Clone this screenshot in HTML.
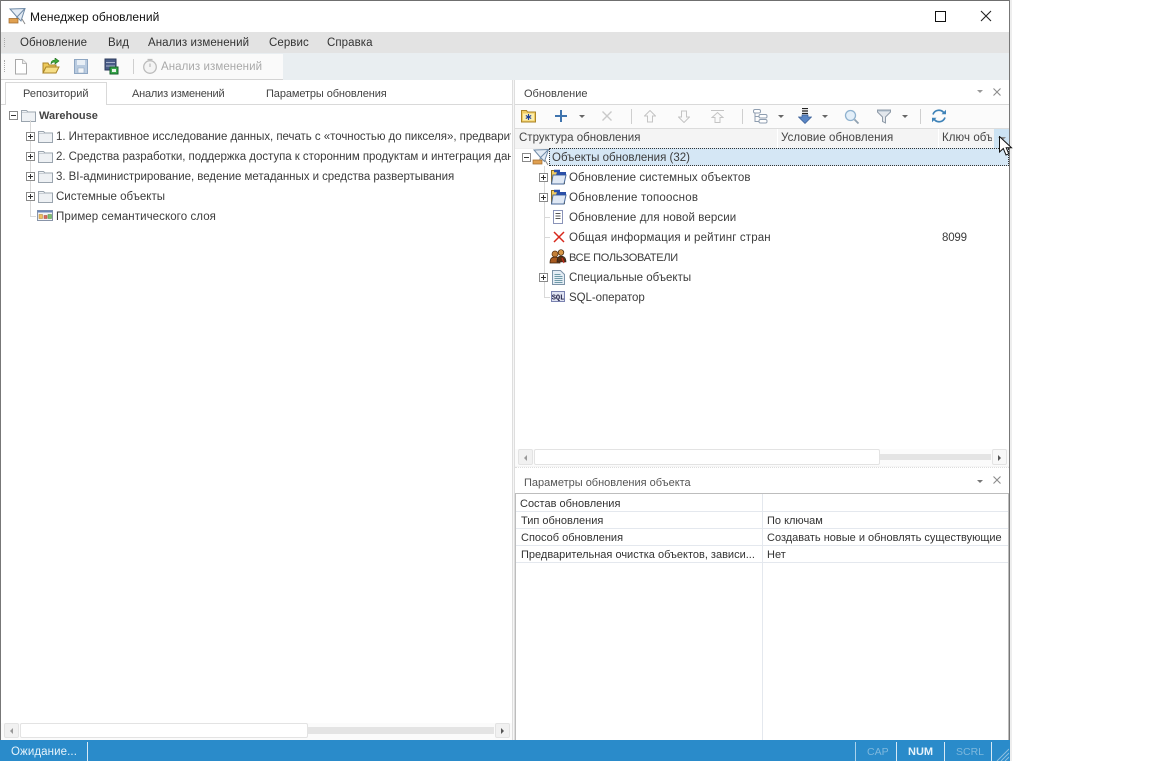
<!DOCTYPE html>
<html lang="ru"><head><meta charset="utf-8"><title>Менеджер обновлений</title>
<style>
html,body{margin:0;padding:0;background:#fff;overflow:hidden}
#p{position:relative;width:1174px;height:761px;overflow:hidden;font:11.5px "Liberation Sans",sans-serif;color:#3c3c3c}
#p div,#p svg{position:absolute}
.t{white-space:nowrap;line-height:14px;letter-spacing:.07px;overflow:hidden;margin-top:1px}
.s{font-size:11px;letter-spacing:0}
.pl{width:9px;height:9px;border:1px solid #8a8a8a;background:#fff;box-sizing:border-box}
.pl:before{content:"";position:absolute;left:1px;top:3px;width:5px;height:1px;background:#333}
.pl.m:after{content:"";position:absolute;left:3px;top:1px;width:1px;height:5px;background:#333}
.dv{background:#cfcfcf;width:1px}
.hl{background:#d9d9d9;height:1px}
.vl{background:#d9d9d9;width:1px}
.tri{width:0;height:0;border-left:3px solid transparent;border-right:3px solid transparent;border-top:3px solid #666}
</style></head><body><div id="p">
<!-- window -->
<div style="left:0;top:0;width:1010px;height:761px;background:#fff"></div>
<div style="left:0;top:0;width:1010px;height:1px;background:#6f6f6f"></div>
<div style="left:0;top:0;width:1px;height:740px;background:#777"></div>
<div style="left:1009px;top:0;width:1px;height:761px;background:#777"></div>
<div style="left:1010px;top:0;width:2px;height:761px;background:#eee"></div>
<!-- title -->
<svg style="left:8px;top:7px" width="19" height="18" viewBox="0 0 19 18"><path d="M2 2L17 1.500L13 14L9 10Z" fill="#e3ebf4" stroke="#6f8aa6"/><path d="M17 1.500L9 10L8 14" fill="none" stroke="#6f8aa6"/><path d="M1 11.500h9v4.500H1z" fill="#e0a050" stroke="#a06a2a" stroke-width=".7"/><path d="M14 12l3 5" stroke="#888"/></svg>
<div class="t" style="left:30px;top:10px;font-size:12px;margin-top:0;color:#111;letter-spacing:.06px">Менеджер обновлений</div>
<div style="left:935px;top:11px;width:9px;height:9px;border:1px solid #111"></div>
<svg style="left:980px;top:10px" width="12" height="12"><path d="M1 1L11 11M11 1L1 11" stroke="#222" stroke-width="1.100"/></svg>
<!-- menu -->
<div style="left:1px;top:32px;width:1008px;height:21px;background:#e3e3e3"></div>
<div class="t" style="left:20px;top:35px;color:#333">Обновление</div>
<div class="t" style="left:108px;top:35px;color:#333">Вид</div>
<div class="t" style="left:148px;top:35px;color:#333">Анализ изменений</div>
<div class="t" style="left:269px;top:35px;color:#333">Сервис</div>
<div class="t" style="left:327px;top:35px;color:#333">Справка</div>
<div style="left:4px;top:38px;width:2px;height:9px;border-left:1px dotted #aaa"></div>
<!-- toolbar -->
<div style="left:1px;top:53px;width:1008px;height:27px;background:#e9eef1"></div>
<div style="left:1px;top:54px;width:282px;height:25px;background:#fafafa"></div>
<div style="left:1px;top:79px;width:282px;height:1px;background:#d4d4d4"></div>
<div style="left:4px;top:60px;width:2px;height:12px;border-left:1px dotted #aaa"></div>
<svg style="left:14px;top:59px" width="14" height="16"><path d="M1.500 .5h7l4 4v10.500h-11z" fill="#fff" stroke="#a8a8a8"/><path d="M8.500 .5v4h4" fill="#eee" stroke="#bbb"/></svg>
<svg style="left:42px;top:58px" width="18" height="16"><path d="M1 5h5l1 2h7v8H1z" fill="#eec95a" stroke="#a98428"/><path d="M1 15l3-6h13l-3 6z" fill="#f6de86" stroke="#a98428"/><path d="M9 6c0-3 2-4 4-4V0l4 3-4 3V4c-1 0-3 0-4 2z" fill="#3faa3a" stroke="#1e6f1e" stroke-width=".6"/></svg>
<svg style="left:74px;top:59px" width="14" height="15"><path d="M.5.500h13v14H.5z" fill="#b9cbe0" stroke="#8ea6c2"/><path d="M3 1h8v5H3z" fill="#e8eff6"/><path d="M4 9h6v5H4z" fill="#f2f5f8" stroke="#8ea6c2" stroke-width=".6"/></svg>
<svg style="left:104px;top:58px" width="16" height="17"><path d="M1 1h11v11H1z" fill="#4a5d88" stroke="#2c3a5c"/><path d="M2 4.500h9M2 8h9" stroke="#a8b4cc"/><rect x="6" y="9" width="8" height="7" fill="#37a84a" stroke="#14602a"/><rect x="8" y="11" width="4" height="3" fill="#e8f4e8"/></svg>
<div class="dv" style="left:133px;top:59px;height:15px"></div>
<svg style="left:142px;top:58px" width="16" height="16"><circle cx="8" cy="9" r="6.300" fill="#f4f4f4" stroke="#bcbcbc" stroke-width="1.300"/><path d="M8 9V5.500M5.500 1.500h5" stroke="#bcbcbc" stroke-width="1.200" fill="none"/></svg>
<div class="t" style="left:161px;top:59px;color:#a9a9a9">Анализ изменений</div>
<!-- left tabs -->
<div style="left:1px;top:80px;width:1008px;height:660px;background:#f5f5f5"></div>
<div style="left:1px;top:104px;width:511px;height:636px;background:#fff"></div>
<div style="left:1px;top:104px;width:511px;height:1px;background:#d9d9d9"></div>
<div style="left:1px;top:80px;width:511px;height:2px;background:#fff"></div>
<div style="left:1px;top:82px;width:511px;height:22px;background:#fff"></div>
<div style="left:5px;top:82px;width:102px;height:23px;background:#fff;border:1px solid #d9d9d9;border-bottom:0;box-sizing:border-box"></div>
<div class="t s" style="left:23px;top:86px;color:#444">Репозиторий</div>
<div class="t s" style="left:132px;top:86px;color:#444;letter-spacing:-.2px">Анализ изменений</div>
<div class="t s" style="left:266px;top:86px;color:#444;letter-spacing:-.1px">Параметры обновления</div>
<!-- left tree -->
<div class="pl" style="left:9px;top:111px"></div>
<svg style="left:21px;top:109px" width="15" height="13"><path d="M.5 1.500h5l1.500 1.500h7.500v9.500H.5z" fill="#eef1f4" stroke="#9aa4ae"/><path d="M1 3.500h13" stroke="#c8ced4"/></svg>
<div class="t s" style="left:39px;top:108px;font-weight:bold;color:#444">Warehouse</div>
<div class="vl" style="left:30px;top:120px;height:96px"></div>
<div class="hl" style="left:30px;top:216px;width:6px"></div>
<div class="pl m" style="left:26px;top:132px"></div>
<svg style="left:38px;top:130px" width="15" height="13"><path d="M.5 1.500h5l1.500 1.500h7.500v9.500H.5z" fill="#eef1f4" stroke="#9aa4ae"/><path d="M1 3.500h13" stroke="#c8ced4"/></svg>
<div class="t" style="left:56px;top:129px;width:455px;letter-spacing:-.04px">1. Интерактивное исследование данных, печать с «точностью до пикселя», предварительный просмотр</div>
<div class="pl m" style="left:26px;top:152px"></div>
<svg style="left:38px;top:150px" width="15" height="13"><path d="M.5 1.500h5l1.500 1.500h7.500v9.500H.5z" fill="#eef1f4" stroke="#9aa4ae"/><path d="M1 3.500h13" stroke="#c8ced4"/></svg>
<div class="t" style="left:56px;top:149px;width:455px;letter-spacing:-.04px">2. Средства разработки, поддержка доступа к сторонним продуктам и интеграция данных</div>
<div class="pl m" style="left:26px;top:172px"></div>
<svg style="left:38px;top:170px" width="15" height="13"><path d="M.5 1.500h5l1.500 1.500h7.500v9.500H.5z" fill="#eef1f4" stroke="#9aa4ae"/><path d="M1 3.500h13" stroke="#c8ced4"/></svg>
<div class="t" style="left:56px;top:169px;letter-spacing:-.04px">3. BI-администрирование, ведение метаданных и средства развертывания</div>
<div class="pl m" style="left:26px;top:192px"></div>
<svg style="left:38px;top:190px" width="15" height="13"><path d="M.5 1.500h5l1.500 1.500h7.500v9.500H.5z" fill="#eef1f4" stroke="#9aa4ae"/><path d="M1 3.500h13" stroke="#c8ced4"/></svg>
<div class="t" style="left:56px;top:189px;letter-spacing:0">Системные объекты</div>
<svg style="left:37px;top:210px" width="17" height="12"><path d="M.5.500h15v10H.5z" fill="#f5f5f5" stroke="#8894a8"/><path d="M.5.500h15v2H.5z" fill="#6b87b8"/><rect x="2" y="4.500" width="3.500" height="4" fill="#f0c060" stroke="#b08030" stroke-width=".5"/><rect x="7" y="5.500" width="3" height="3" fill="#e06a5a" stroke="#a04030" stroke-width=".5"/><rect x="11" y="4.500" width="3.500" height="4" fill="#7cc070" stroke="#4a8a40" stroke-width=".5"/></svg>
<div class="t" style="left:56px;top:209px;letter-spacing:.08px">Пример семантического слоя</div>
<!-- left scrollbar -->
<div style="left:1px;top:723px;width:511px;height:17px;background:#fbfbfb"></div>
<div style="left:4px;top:723px;width:15px;height:15px;background:#f1f1f1;border:1px solid #e3e3e3;border-radius:2px;box-sizing:border-box"></div>
<div style="left:10px;top:728px;width:0;height:0;border-top:3px solid transparent;border-bottom:3px solid transparent;border-right:3px solid #999"></div>
<div style="left:20px;top:723px;width:288px;height:15px;background:#fff;border:1px solid #e3e3e3;border-radius:2px;box-sizing:border-box"></div>
<div style="left:308px;top:727px;width:186px;height:7px;background:#e4e4e4"></div>
<div style="left:495px;top:723px;width:15px;height:15px;background:#f1f1f1;border:1px solid #e3e3e3;border-radius:2px;box-sizing:border-box"></div>
<div style="left:501px;top:728px;width:0;height:0;border-top:3px solid transparent;border-bottom:3px solid transparent;border-left:3px solid #555"></div>
<!-- right panel -->
<div style="left:512px;top:80px;width:3px;height:660px;background:#f6f6f6;border-left:1px solid #dedede;border-right:1px solid #dedede;box-sizing:border-box"></div>
<div style="left:515px;top:80px;width:494px;height:25px;background:#fff"></div>
<div class="t s" style="left:524px;top:86px;color:#444">Обновление</div>
<div class="tri" style="left:977px;top:90px;border-top-color:#999"></div>
<svg style="left:992px;top:87px" width="10" height="10"><path d="M1.500 1.500L8.500 8.500M8.500 1.500L1.500 8.500" stroke="#8c8c8c" stroke-width="1.100"/></svg>
<!-- right toolbar -->
<div style="left:515px;top:104px;width:494px;height:1px;background:#d9d9d9"></div>
<div style="left:515px;top:105px;width:494px;height:23px;background:#fbfbfb"></div>
<div style="left:515px;top:128px;width:494px;height:1px;background:#dcdcdc"></div>
<svg style="left:521px;top:109px" width="15" height="14"><path d="M.5 1.500h5l1 1.500h8v10H.5z" fill="#f2cd62" stroke="#a98428"/><path d="M2 4.500h11v7H2z" fill="#fbeeb0"/><path d="M7.500 5v6M4.800 6.500l5.400 3M10.200 6.500l-5.400 3" stroke="#1a3f9a" stroke-width="1.100"/></svg>
<svg style="left:555px;top:110px" width="12" height="12"><path d="M6 0v12M0 6h12" stroke="#3f74ae" stroke-width="2"/></svg>
<div class="tri" style="left:579px;top:115px"></div>
<svg style="left:602px;top:111px" width="10" height="10"><path d="M.5.500L9.500 9.500M9.500.500L.5 9.500" stroke="#c9c9c9" stroke-width="1.400"/></svg>
<div class="dv" style="left:631px;top:109px;height:15px"></div>
<svg style="left:644px;top:110px" width="12" height="13"><path d="M6 .5L11.500 6H8.500v6h-5V6H.5z" fill="#fafafa" stroke="#c4c4c4"/></svg>
<svg style="left:678px;top:110px" width="12" height="13"><path d="M6 12.500L11.500 7H8.500V1h-5v6H.5z" fill="#fafafa" stroke="#c4c4c4"/></svg>
<svg style="left:711px;top:110px" width="13" height="13"><path d="M0 .5h13" stroke="#c4c4c4"/><path d="M6.500 2.500L12 7.500H9v5H4v-5H1z" fill="#fafafa" stroke="#c4c4c4"/></svg>
<div class="dv" style="left:742px;top:109px;height:15px"></div>
<svg style="left:753px;top:108px" width="15" height="16"><path d="M2 5v8.500h4M2 8.500h4" fill="none" stroke="#8f9eb0"/><rect x=".5" y="1.500" width="7" height="3.500" rx="1.500" fill="#fff" stroke="#8f9eb0"/><rect x="6" y="6.500" width="8" height="3.500" rx="1.500" fill="#fff" stroke="#8f9eb0"/><rect x="6" y="11.500" width="8" height="3.500" rx="1.500" fill="#fff" stroke="#8f9eb0"/></svg>
<div class="tri" style="left:778px;top:115px"></div>
<svg style="left:798px;top:108px" width="14" height="16"><path d="M4 .5h6M4 3h6M4 5.500h6" stroke="#222" stroke-width="1.200"/><path d="M4 7h6v2h3.500L7 15.500.5 9H4z" fill="#5a86c4" stroke="#3a5f96" stroke-width=".7"/></svg>
<div class="tri" style="left:822px;top:115px"></div>
<svg style="left:844px;top:109px" width="16" height="16"><circle cx="6.500" cy="6.500" r="5" fill="#e3eff9" stroke="#8fb2cf" stroke-width="1.300"/><path d="M10.500 10.500l4 4" stroke="#8fa0b0" stroke-width="1.800"/></svg>
<svg style="left:877px;top:109px" width="14" height="15"><path d="M.5 1h13v2L8.500 8v6l-3-1.500V8L.5 3z" fill="#e3e7ec" stroke="#8f9ba8"/><path d="M1 1.500h12v1H1z" fill="#aebccb"/></svg>
<div class="tri" style="left:902px;top:115px"></div>
<div class="dv" style="left:920px;top:109px;height:15px"></div>
<svg style="left:931px;top:108px" width="16" height="16"><path d="M2 6.500A6.200 6.200 0 0 1 13 5M14 9.500A6.200 6.200 0 0 1 3 11" fill="none" stroke="#3f83b8" stroke-width="1.700"/><path d="M15 1.800v4.500h-4.500zM1 14.200V9.700h4.500z" fill="#3f83b8"/></svg>
<!-- column headers -->
<div style="left:515px;top:129px;width:494px;height:19px;background:#f4f4f4"></div>
<div style="left:515px;top:148px;width:494px;height:1px;background:#eee"></div>
<div style="left:777px;top:129px;width:1px;height:19px;background:#fff"></div>
<div style="left:938px;top:129px;width:1px;height:19px;background:#fff"></div>
<div class="t" style="left:519px;top:130px;color:#444;letter-spacing:0">Структура обновления</div>
<div class="t" style="left:781px;top:130px;color:#444;letter-spacing:.05px">Условие обновления</div>
<div class="t" style="left:942px;top:130px;width:50px;color:#444">Ключ объекта</div>
<div style="left:994px;top:129px;width:15px;height:19px;background:#cde3f3"></div>
<div class="tri" style="left:998px;top:137px;border-left-width:4px;border-right-width:4px;border-top-width:4px;border-top-color:#8a8a8a"></div>
<!-- right tree -->
<div style="left:515px;top:149px;width:494px;height:300px;background:#fff"></div>
<div style="left:549px;top:148px;width:460px;height:18px;background:#d5e7f5;border:1px dotted #333;box-sizing:border-box;border-right:0"></div>
<div style="left:1008px;top:148px;width:1px;height:18px;border-left:1px dotted #333;box-sizing:border-box"></div>
<div class="pl" style="left:522px;top:153px"></div>
<svg style="left:532px;top:148px" width="18" height="18" viewBox="0 0 18 18"><path d="M2 2L16.500 1.500L12.500 13.500L8.500 9.500Z" fill="#e3ebf4" stroke="#6f8aa6"/><path d="M16.500 1.500L8.500 9.500L7.500 13" fill="none" stroke="#6f8aa6"/><path d="M1 12h9v4H1z" fill="#e0a050" stroke="#a06a2a" stroke-width=".7"/><path d="M13 12l3 5" stroke="#888"/></svg>
<div class="t" style="left:552px;top:150px;letter-spacing:0">Объекты обновления (32)</div>
<div class="vl" style="left:544px;top:166px;height:131px"></div>
<div class="hl" style="left:544px;top:217px;width:6px"></div>
<div class="hl" style="left:544px;top:237px;width:6px"></div>
<div class="hl" style="left:544px;top:297px;width:6px"></div>
<div class="pl m" style="left:539px;top:173px"></div>
<svg style="left:550px;top:169px" width="17" height="16"><path d="M1.500 1.500h6v3h7v10h-13z" fill="#f2cd62" stroke="#8a6c20"/><path d="M3 6h13l-2 9H1.500z" fill="#dfe8f4" stroke="#4a6a9a"/><path d="M4 .8h6v2.500H4zM7 3h9v3H6z" fill="#2a50a8"/></svg>
<div class="t" style="left:569px;top:170px">Обновление системных объектов</div>
<div class="pl m" style="left:539px;top:193px"></div>
<svg style="left:550px;top:189px" width="17" height="16"><path d="M1.500 1.500h6v3h7v10h-13z" fill="#f2cd62" stroke="#8a6c20"/><path d="M3 6h13l-2 9H1.500z" fill="#dfe8f4" stroke="#4a6a9a"/><path d="M4 .8h6v2.500H4zM7 3h9v3H6z" fill="#2a50a8"/></svg>
<div class="t" style="left:569px;top:190px;letter-spacing:.22px">Обновление топооснов</div>
<svg style="left:553px;top:210px" width="11" height="14"><path d="M.5.500h9v13h-9z" fill="#fff" stroke="#8a93b8"/><path d="M2.500 3.500h5M2.500 6h5M2.500 8.500h5" stroke="#555"/></svg>
<div class="t" style="left:569px;top:210px;letter-spacing:.1px">Обновление для новой версии</div>
<svg style="left:553px;top:231px" width="12" height="12"><path d="M1 1L11 11M11 1L1 11" stroke="#d8281c" stroke-width="1.500"/></svg>
<div class="t" style="left:569px;top:230px;letter-spacing:.15px">Общая информация и рейтинг стран</div>
<div class="t" style="left:942px;top:230px;letter-spacing:-.2px">8099</div>
<svg style="left:549px;top:248px" width="18" height="17"><circle cx="6" cy="6" r="3" fill="#c48038" stroke="#5a3010" stroke-width=".7"/><path d="M1 15c0-5 2-6 5-6s5 2 5 6z" fill="#a85a20" stroke="#3a2008" stroke-width=".7"/><circle cx="12" cy="4.500" r="2.800" fill="#d89848" stroke="#3a2008" stroke-width=".7"/><path d="M8 14c0-5 2-6 4-6s5 1 5 6z" fill="#5a3010" stroke="#222" stroke-width=".6"/><path d="M13 10l2 5" stroke="#c8281c" stroke-width="1.200"/></svg>
<div class="t s" style="left:569px;top:250px;letter-spacing:-.3px">ВСЕ ПОЛЬЗОВАТЕЛИ</div>
<div class="pl m" style="left:539px;top:273px"></div>
<svg style="left:552px;top:270px" width="13" height="15"><path d="M.5.500h8l4 4v10H.5z" fill="#e4edf5" stroke="#7d93a8"/><path d="M2.500 4.500h6M2.500 6.500h8M2.500 8.500h8M2.500 10.500h8M2.500 12.500h8" stroke="#6f9aa8"/></svg>
<div class="t" style="left:569px;top:270px;letter-spacing:0">Специальные объекты</div>
<svg style="left:551px;top:291px" width="14" height="12"><path d="M.5.500h13v10H.5z" fill="#dfe3f2" stroke="#7a82b0"/><text x="7" y="8.500" font-family="Liberation Mono,monospace" font-size="7" font-weight="bold" text-anchor="middle" fill="#1a1a40">SQL</text></svg>
<div class="t" style="left:569px;top:290px;letter-spacing:-.05px">SQL-оператор</div>
<!-- right scrollbar -->
<div style="left:515px;top:449px;width:494px;height:17px;background:#fbfbfb"></div>
<div style="left:518px;top:449px;width:15px;height:16px;background:#f1f1f1;border:1px solid #e3e3e3;border-radius:2px;box-sizing:border-box"></div>
<div style="left:524px;top:455px;width:0;height:0;border-top:3px solid transparent;border-bottom:3px solid transparent;border-right:3px solid #999"></div>
<div style="left:534px;top:449px;width:346px;height:16px;background:#fff;border:1px solid #e3e3e3;border-radius:2px;box-sizing:border-box"></div>
<div style="left:880px;top:454px;width:111px;height:6px;background:#e4e4e4"></div>
<div style="left:992px;top:449px;width:15px;height:16px;background:#f8f8f8;border:1px solid #e3e3e3;border-radius:2px;box-sizing:border-box"></div>
<div style="left:998px;top:455px;width:0;height:0;border-top:3px solid transparent;border-bottom:3px solid transparent;border-left:3px solid #555"></div>
<!-- params panel -->
<div style="left:515px;top:467px;width:494px;height:26px;background:#fff;border-top:1px dotted #ddd;box-sizing:border-box"></div>
<div class="t s" style="left:524px;top:475px;color:#555">Параметры обновления объекта</div>
<div class="tri" style="left:977px;top:480px;border-top-color:#777"></div>
<svg style="left:992px;top:475px" width="10" height="10"><path d="M1.500 1.500L8.500 8.500M8.500 1.500L1.500 8.500" stroke="#8c8c8c" stroke-width="1.100"/></svg>
<div style="left:515px;top:493px;width:494px;height:247px;background:#fff;border:1px solid #bdbdbd;border-bottom:0;box-sizing:border-box"></div>
<div style="left:762px;top:494px;width:1px;height:246px;background:#e4e8ee"></div>
<div style="left:516px;top:511px;width:492px;height:1px;background:#e4e8ee"></div>
<div style="left:516px;top:528px;width:492px;height:1px;background:#e4e8ee"></div>
<div style="left:516px;top:545px;width:492px;height:1px;background:#e4e8ee"></div>
<div style="left:516px;top:562px;width:492px;height:1px;background:#e4e8ee"></div>
<div class="t s" style="left:520px;top:496px;color:#333">Состав обновления</div>
<div class="t s" style="left:521px;top:513px;color:#333">Тип обновления</div>
<div class="t s" style="left:521px;top:530px;color:#333">Способ обновления</div>
<div class="t s" style="left:521px;top:547px;color:#333">Предварительная очистка объектов, зависи...</div>
<div class="t s" style="left:767px;top:513px;color:#333">По ключам</div>
<div class="t s" style="left:767px;top:530px;color:#333">Создавать новые и обновлять существующие</div>
<div class="t s" style="left:767px;top:547px;color:#333">Нет</div>
<!-- status -->
<div style="left:0;top:740px;width:1010px;height:21px;background:#2a8bca"></div>
<div class="t" style="left:11px;top:744px;color:#e6f3fb;letter-spacing:.1px">Ожидание...</div>
<div style="left:87px;top:742px;width:1px;height:19px;background:#d6e9f5"></div>
<div style="left:855px;top:742px;width:1px;height:19px;background:#a9d2ec"></div>
<div style="left:896px;top:742px;width:1px;height:19px;background:#d6e9f5"></div>
<div style="left:944px;top:742px;width:1px;height:19px;background:#d6e9f5"></div>
<div style="left:991px;top:742px;width:1px;height:19px;background:#d6e9f5"></div>
<div class="t s" style="left:867px;top:744px;color:#7eb8dd;font-size:10.500px">CAP</div>
<div class="t s" style="left:908px;top:744px;color:#e6f3fb;font-weight:bold">NUM</div>
<div class="t s" style="left:956px;top:744px;color:#7eb8dd;font-size:10.500px">SCRL</div>
<svg style="left:996px;top:747px" width="13" height="14"><path d="M1 14L13 2M5 14L13 6M9 14L13 10" stroke="#8fc0e0" stroke-width="1"/></svg>
<!-- cursor -->
<svg style="left:999px;top:136px" width="14" height="22"><path d="M.5.500V16L4.300 12.500L7 19L9.800 17.800L7.200 11.700H12.500Z" fill="#fff" stroke="#111" stroke-width="1"/></svg>
</div></body></html>
